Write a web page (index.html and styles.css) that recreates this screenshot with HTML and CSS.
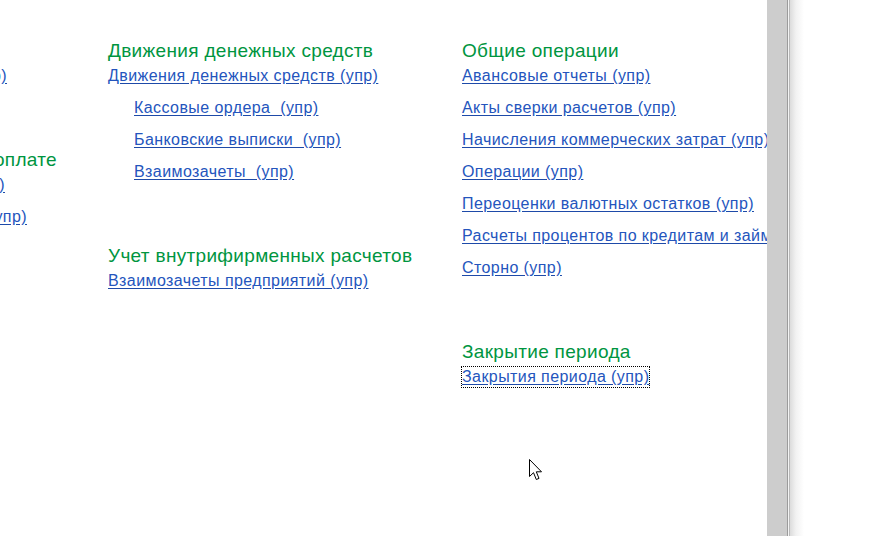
FILE: index.html
```html
<!DOCTYPE html>
<html lang="ru">
<head>
<meta charset="utf-8">
<title>Казначейство</title>
<link rel="stylesheet" href="styles.css">
</head>
<body>
<div class="page">
  <div class="main">
    <div class="col col1">
      <div class="group">
        <div class="hdr off">Планирование</div>
        <a class="lnk e50" href="#">Заявки на расходование средств (упр)</a>
      </div>
      <div class="group">
        <div class="hdr">Контроль задолженности по оплате</div>
        <a class="lnk e52" href="#">Планы оплат (упр)</a>
        <a class="lnk e30" href="#">Графики платежей (упр)</a>
      </div>
    </div>
    <div class="col col2">
      <div class="group">
        <div class="hdr">Движения денежных средств</div>
        <a class="lnk" href="#">Движения денежных средств (упр)</a>
        <a class="lnk sub" href="#">Кассовые ордера  (упр)</a>
        <a class="lnk sub" href="#">Банковские выписки  (упр)</a>
        <a class="lnk sub" href="#">Взаимозачеты  (упр)</a>
      </div>
      <div class="group">
        <div class="hdr">Учет внутрифирменных расчетов</div>
        <a class="lnk" href="#">Взаимозачеты предприятий (упр)</a>
      </div>
    </div>
    <div class="col col3">
      <div class="group">
        <div class="hdr">Общие операции</div>
        <a class="lnk" href="#">Авансовые отчеты (упр)</a>
        <a class="lnk" href="#">Акты сверки расчетов (упр)</a>
        <a class="lnk" href="#">Начисления коммерческих затрат (упр)</a>
        <a class="lnk" href="#">Операции (упр)</a>
        <a class="lnk" href="#">Переоценки валютных остатков (упр)</a>
        <a class="lnk" href="#">Расчеты процентов по кредитам и займам (упр)</a>
        <a class="lnk" href="#">Сторно (упр)</a>
      </div>
      <div class="group">
        <div class="hdr">Закрытие периода</div>
        <a class="lnk focus" href="#">Закрытия периода (упр)</a>
      </div>
    </div>
  </div>
  <div class="vbar"></div>
  <div class="edge"></div>
  <div class="side"></div>
</div>
<svg class="cursor" width="14" height="23" viewBox="0 0 14 23" aria-hidden="true">
  <path d="M0.5 0.5 L0.5 17.5 L4.5 13.7 L7.3 20.5 L10 19.4 L7.3 12.8 L12.5 12.8 Z" fill="#fff" stroke="#000" stroke-width="1" stroke-linejoin="miter"/>
</svg>
</body>
</html>
```

FILE: styles.css
```css
html, body {
  margin: 0;
  padding: 0;
  background: #fff;
}

body {
  width: 885px;
  height: 536px;
  overflow: hidden;
  position: relative;
  font-family: "Liberation Sans", Arial, sans-serif;
}

.page {
  display: flex;
  height: 536px;
}

.main {
  width: 767px;
  flex-shrink: 0;
  overflow: hidden;
  display: flex;
  padding-top: 40px;
  box-sizing: border-box;
  background: #fff;
}

.col {
  display: flex;
  flex-direction: column;
  gap: 63px;
  flex-shrink: 0;
  white-space: pre;
}

.col1 {
  width: 57px;
  align-items: flex-end;
}

.col2 {
  width: 354px;
  margin-left: 51px;
}

.col3 {
  width: 420px;
}

.group {
  display: flex;
  flex-direction: column;
  align-items: flex-start;
}

.col1 .group {
  align-items: flex-end;
}

.hdr {
  font-size: 19px;
  letter-spacing: 0.32px;
  line-height: 22px;
  height: 22px;
  color: #00953f;
  margin-bottom: 4px;
}

.lnk {
  font-size: 16px;
  letter-spacing: 0.42px;
  line-height: 20px;
  height: 20px;
  color: #2455bd;
  text-decoration: underline;
  text-decoration-color: #1e4aa8;
  text-underline-offset: 2px;
}

.lnk + .lnk {
  margin-top: 12px;
}

.sub {
  margin-left: 26px;
}

.focus {
  outline: 1px dotted #000;
}

.off { padding-right: 80px; }
.e50 { margin-right: 50px; }
.e52 { margin-right: 52px; }
.e30 { margin-right: 30px; }

.vbar {
  width: 20px;
  flex-shrink: 0;
  background: #cdcdcd;
}

.edge {
  width: 3px;
  flex-shrink: 0;
  background: linear-gradient(to right, #9b9b9b 0 1px, #f4f4f4 1px 2px, #b9b9b9 2px 3px);
}

.side {
  flex: 1;
  background: linear-gradient(to right, #dcdcdc 0, #f2f2f2 6px, #ffffff 14px);
}

.cursor {
  position: absolute;
  left: 529px;
  top: 459px;
}
```
